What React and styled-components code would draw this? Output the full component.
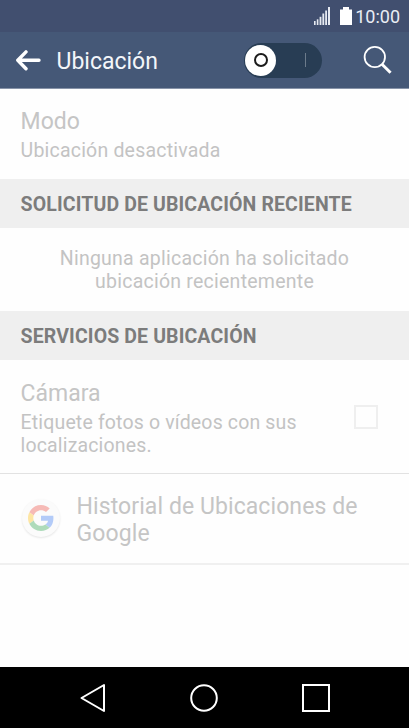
import React from 'react';
import styled, {createGlobalStyle} from 'styled-components';

export default function App() {
    return (
        <Screen>
            <GlobalStyle />
            <StatusBar>
                <SignalIcon />
                <BatteryIcon />
                <Clock>10:00</Clock>
            </StatusBar>
            <Header>
                <BackIcon />
                <Title>Ubicación</Title>
                <Toggle>
                    <Knob />
                    <ToggleMark />
                </Toggle>
                <SearchIcon />
            </Header>
            <ModeRow>
                <RowTitle>Modo</RowTitle>
                <RowText $spacing="0.2px">Ubicación desactivada</RowText>
            </ModeRow>
            <SectionTitle>SOLICITUD DE UBICACIÓN RECIENTE</SectionTitle>
            <EmptyText>
                Ninguna aplicación ha solicitado<br />
                ubicación recientemente
            </EmptyText>
            <SectionTitle>SERVICIOS DE UBICACIÓN</SectionTitle>
            <CameraRow>
                <div>
                    <RowTitle>Cámara</RowTitle>
                    <RowText $spacing="0.15px">Etiquete fotos o vídeos con sus<br />localizaciones.</RowText>
                </div>
                <Checkbox />
            </CameraRow>
            <HistoryRow>
                <GoogleBadge>
                    <GoogleIcon />
                </GoogleBadge>
                <HistoryTitle>Historial de Ubicaciones de<br />Google</HistoryTitle>
            </HistoryRow>
            <NavBar>
                <svg width="26" height="30" viewBox="0 0 26 30">
                    <path d="M1.5 15 L24 2 V28 Z" fill="none" stroke="#fff" strokeWidth="2" strokeLinejoin="round" />
                </svg>
                <svg width="28" height="30" viewBox="0 0 28 30">
                    <circle cx="14" cy="15" r="12.8" fill="none" stroke="#fff" strokeWidth="2" />
                </svg>
                <svg width="28" height="30" viewBox="0 0 28 30">
                    <rect x="1" y="2" width="26" height="26" fill="none" stroke="#fff" strokeWidth="2" />
                </svg>
            </NavBar>
        </Screen>
    )
}

function SignalIcon() {
    return (
        <svg width="17" height="19" viewBox="0 0 17 19" fill="#e6eaf1">
            <rect x="0" y="14" width="1.6" height="4" />
            <rect x="2.8" y="12.3" width="1.6" height="5.7" />
            <rect x="5.6" y="9.8" width="1.8" height="8.2" />
            <rect x="8.4" y="6.5" width="1.8" height="11.5" />
            <rect x="11.2" y="3.5" width="1.8" height="14.5" />
            <rect x="14" y="0" width="2" height="18" />
        </svg>
    )
}

function BatteryIcon() {
    return (
        <svg width="12" height="19" viewBox="0 0 12 19">
            <path d="M0 2.5 H3 V0 H9 V2.5 H12 V18 H0 Z" fill="#fff" />
        </svg>
    )
}

function BackIcon() {
    return (
        <svg width="26" height="22" viewBox="0 0 26 22">
            <path d="M11 2.9 L2.8 11.3 L11 19.7 M3.2 11.3 H24" fill="none" stroke="#fff" strokeWidth="3.4" strokeLinecap="round" strokeLinejoin="round" />
        </svg>
    )
}

function SearchIcon() {
    return (
        <svg width="30" height="30" viewBox="0 0 30 30" fill="none" stroke="#fff">
            <circle cx="11.8" cy="12" r="10.2" strokeWidth="1.8" />
            <path d="M19 19.2 L27.6 27.7" strokeWidth="3" />
        </svg>
    )
}

function GoogleIcon() {
    return (
        <svg width="26" height="26" viewBox="0 0 48 48">
            <path fill="#f6bab6" d="M24 9.5c3.54 0 6.71 1.22 9.21 3.6l6.85-6.85C35.9 2.38 30.47 0 24 0 14.62 0 6.51 5.38 2.56 13.22l7.98 6.19C12.43 13.72 17.74 9.5 24 9.5z" />
            <path fill="#b3cbf8" d="M46.98 24.55c0-1.57-.15-3.09-.38-4.55H24v9.02h12.94c-.58 2.96-2.26 5.48-4.78 7.18l7.73 6c4.51-4.18 7.09-10.36 7.09-17.65z" />
            <path fill="#fde5a3" d="M10.53 28.59c-.48-1.45-.76-2.99-.76-4.59s.27-3.14.76-4.59l-7.98-6.19C.92 16.46 0 20.12 0 24c0 3.88.92 7.54 2.56 10.78l7.97-6.19z" />
            <path fill="#aedbba" d="M24 48c6.48 0 11.93-2.13 15.89-5.81l-7.73-6c-2.15 1.45-4.92 2.3-8.16 2.3-6.26 0-11.57-4.22-13.47-9.91l-7.98 6.19C6.51 42.62 14.62 48 24 48z" />
        </svg>
    )
}

const GlobalStyle = createGlobalStyle`
    *, *::after {
        box-sizing: border-box;
    }

    body {
        margin: 0;
        font-family: Roboto, sans-serif;
    }

    svg {
        display: block;
        flex: none;
    }
`

const Screen = styled.main`
    display: flex;
    flex-direction: column;
    width: 409px;
    height: 728px;
    overflow: hidden;
    background: #fefefe;
    white-space: nowrap;
`

const StatusBar = styled.div`
    display: flex;
    justify-content: flex-end;
    height: 32px;
    padding: 7px 9px 0 0;
    background: #414f6f;

    svg + svg {
        margin-left: 9px;
    }
`

const Clock = styled.span`
    margin-left: 3px;
    font-size: 18px;
    line-height: 20px;
    color: #e9edf4;
`

const Header = styled.header`
    display: flex;
    align-items: center;
    height: 57px;
    padding: 0 16px 0 15px;
    background: #455877;
    border-bottom: 1px solid #8793a8;
`

const Title = styled.h1`
    flex: 1;
    margin: 0 0 0 15.5px;
    padding-top: 3px;
    font-size: 23px;
    font-weight: 400;
    line-height: 28px;
    color: #f3f6fa;
`

const Toggle = styled.div`
    display: flex;
    align-items: center;
    justify-content: space-between;
    width: 78px;
    height: 35px;
    margin-right: 41px;
    padding: 0 16px 0 1px;
    border-radius: 18px;
    background: #283d54;
`

const Knob = styled.div`
    display: grid;
    place-items: center;
    width: 31px;
    height: 31px;
    border-radius: 50%;
    background: #fff;

    &::after {
        content: '';
        width: 14px;
        height: 14px;
        border: 2px solid #1c1c1c;
        border-radius: 50%;
    }
`

const ToggleMark = styled.div`
    width: 1.5px;
    height: 14px;
    background: #6c7b8b;
`

const ModeRow = styled.section`
    height: 90px;
    padding: 19px 20px 0 20.6px;
`

const RowTitle = styled.h2`
    margin: 0;
    font-size: 23px;
    font-weight: 400;
    line-height: 28px;
    color: #c5c5c5;
`

const RowText = styled.p`
    margin: 3px 0 0;
    font-size: 19.5px;
    line-height: 23px;
    letter-spacing: ${props => props.$spacing || '0'};
    color: #c3c3c3;
`

const SectionTitle = styled.h3`
    height: 49px;
    margin: 0;
    padding-left: 20.6px;
    font-size: 19.5px;
    font-weight: 700;
    line-height: 51px;
    letter-spacing: 0.12px;
    color: #7c7c7c;
    background: #efefef;
`

const EmptyText = styled.p`
    height: 83px;
    margin: 0;
    padding-top: 19px;
    font-size: 19.5px;
    line-height: 23px;
    letter-spacing: 0.24px;
    text-align: center;
    color: #c3c3c3;
`

const CameraRow = styled.section`
    display: flex;
    justify-content: space-between;
    height: 114px;
    padding: 20px 31px 0 20.6px;
    border-bottom: 1px solid #e2e2e2;
`

const Checkbox = styled.div`
    width: 24px;
    height: 24px;
    margin-top: 25px;
    border: 2px solid #efefef;
`

const HistoryRow = styled.section`
    display: flex;
    height: 91px;
    padding: 19px 20px 0 22px;
    border-bottom: 2px solid #f0f0f0;
`

const GoogleBadge = styled.div`
    display: grid;
    place-items: center;
    width: 38px;
    height: 38px;
    margin-top: 6px;
    border-radius: 50%;
    background: #fbfbfb;
    box-shadow: 0 1px 2px #e6e6e6;
`

const HistoryTitle = styled(RowTitle)`
    margin-left: 16.6px;
    line-height: 27px;
    letter-spacing: 0.08px;
`

const NavBar = styled.nav`
    display: flex;
    justify-content: space-between;
    height: 61px;
    margin-top: auto;
    padding: 16px 79px 0 80px;
    background: #000;
`
